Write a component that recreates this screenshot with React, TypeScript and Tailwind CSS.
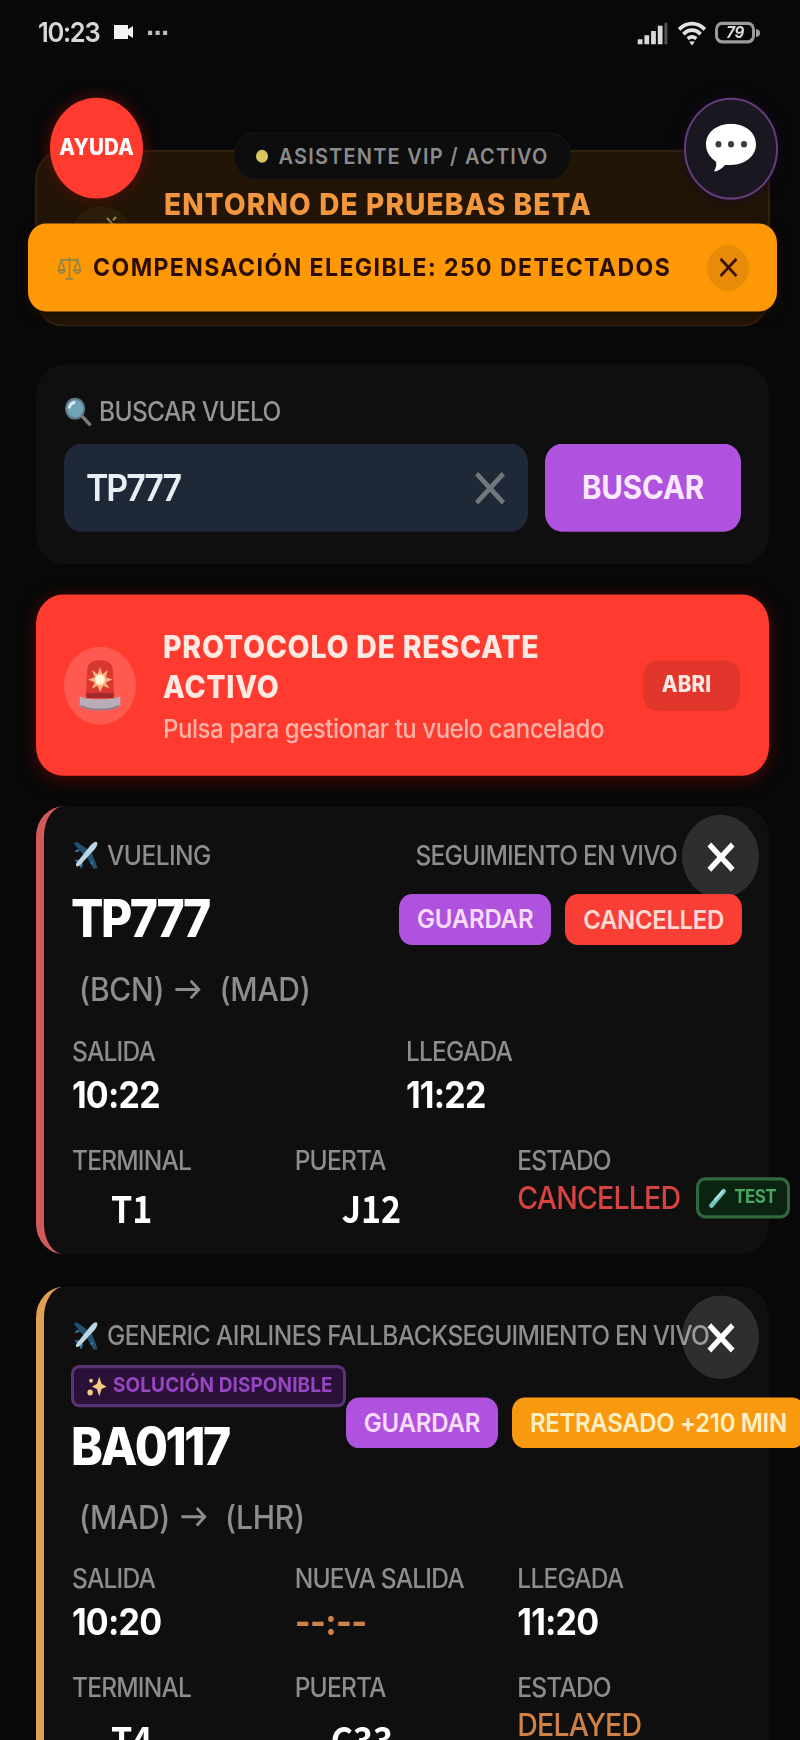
import type { ReactNode } from "react";

type Flight = {
  code: string;
  airline: string;
  from: string;
  to: string;
  departure: string;
  newDeparture?: string;
  arrival: string;
  terminal: string;
  terminalClasses: string;
  gate: string;
  gateClasses: string;
  status: string;
  badge: string;
  solution?: boolean;
  test?: boolean;
  borderClass: string;
  badgeClass: string;
  statusClass: string;
};

const FLIGHTS: Flight[] = [
  {
    code: "TP777",
    airline: "VUELING",
    from: "BCN",
    to: "MAD",
    departure: "10:22",
    arrival: "11:22",
    terminal: "T1",
    terminalClasses: "mt-[11px] pl-[39px]",
    gate: "J12",
    gateClasses: "mt-[11px] pl-[47px]",
    status: "CANCELLED",
    badge: "CANCELLED",
    test: true,
    borderClass: "border-l-[#d2595c]",
    badgeClass: "bg-[#f93e35] text-[#ffd9d2]",
    statusClass: "text-[#d9433f]",
  },
  {
    code: "BA0117",
    airline: "GENERIC AIRLINES FALLBACK",
    from: "MAD",
    to: "LHR",
    departure: "10:20",
    newDeparture: "--:--",
    arrival: "11:20",
    terminal: "T4",
    terminalClasses: "mt-[15px] pl-[39px]",
    gate: "C33",
    gateClasses: "mt-[15px] pl-[36px]",
    status: "DELAYED",
    badge: "RETRASADO +210 MIN",
    solution: true,
    borderClass: "border-l-[#e0a055]",
    badgeClass: "bg-[#f9990f] text-[#fff0c4]",
    statusClass: "text-[#cf8146]",
  },
];

const Cross = ({ className }: { className: string }) => (
  <svg viewBox="0 0 24 24" fill="none" stroke="currentColor" className={className}>
    <path d="M2 2 22 22M22 2 2 22" />
  </svg>
);

const PlaneIcon = () => (
  <svg viewBox="0 0 28 28" className="-ml-px h-[27px] w-[28px] shrink-0">
    <path d="M2 2 6 1 18 9 13 14ZM27 26 23 27 16 16 21 11Z" fill="#24506d" />
    <path d="M3 18 7 18 12 22 10 27 8 23Z" fill="#3d7799" />
    <path d="M26 1c2 1 0 5-2 7L10 22c-2 2-4 3-5 2s0-3 2-5L20 4c2-2 5-4 6-3Z" fill="#bcd6e6" />
    <path d="M4 10 8 9M20 22 22 20" stroke="#3d7799" strokeWidth="2" />
  </svg>
);

const SearchIcon = () => (
  <svg viewBox="0 0 28 28" className="h-[27px] w-[28px] shrink-0">
    <path d="m18 18 8 8" stroke="#77797c" strokeWidth="3.500" strokeLinecap="round" />
    <circle cx="11" cy="11" r="9.5" fill="#6fa3b8" stroke="#5f7884" strokeWidth="2" />
    <path d="M5 11a6 6 0 0 1 6-6" stroke="#d5eaf2" strokeWidth="3" fill="none" />
  </svg>
);

const ScalesIcon = () => (
  <svg viewBox="0 0 26 26" fill="none" stroke="#9a8541" strokeWidth="1.8" className="h-[24px] w-[25px] shrink-0">
    <path d="M13 2v21M3 5h20M9 24h8M4 5 1 15h7L4 5ZM22 5l-4 10h7L22 5Z" />
    <path d="M1 15c1 4 6 4 7 0M18 15c1 4 6 4 7 0" />
  </svg>
);

const SirenIcon = () => (
  <svg viewBox="0 0 44 52" className="h-[50px] w-[44px]">
    <path d="M7 36 9 9c0-10 26-10 26 0l2 27Z" fill="#d93832" />
    <path d="M8 33h28v5H8Z" fill="#a32a2c" />
    <path d="M1 36c6 4 36 4 42 0v9c-3 6-39 6-42 0Z" fill="#b9adb9" />
    <path d="M2 45c6 5 34 5 40 0" stroke="#8f7f8e" strokeWidth="2" fill="none" />
    <path
      d="m22 8 2.5 7 5.500-4-2 7 7 2-7 3 4 6-6.500-3L22 32l-2.500-6-6 3 3-6-7-3 7-2-3-7 6 4Z"
      fill="#ffb17d"
    />
    <circle cx="22" cy="20" r="5" fill="#fff3d8" />
  </svg>
);

const SparklesIcon = () => (
  <svg viewBox="0 0 22 22" fill="#f3cb86" className="h-[20px] w-[21px] shrink-0">
    <path d="m14 1 2.500 7 5.500 3-5.500 2.500L14 21l-2.500-7.500L6 11l5.500-3Z" />
    <circle cx="4" cy="17" r="3" />
    <circle cx="5" cy="5" r="2" />
  </svg>
);

const TubeIcon = () => (
  <svg viewBox="0 0 20 20" strokeLinecap="round" className="h-[19px] w-[20px] shrink-0">
    <path d="M3 17 16 3" stroke="#6fc9c0" strokeWidth="4.500" />
    <path d="M7 11 15 3" stroke="#b5e6e3" strokeWidth="2" />
  </svg>
);

const StatusBar = () => (
  <div className="flex h-[60px] items-center pr-[40px] pl-[38px] text-[#d8d8d8]">
    <span className="text-[25.500px] font-semibold tracking-[-1.3px]">10:23</span>
    <svg viewBox="0 0 20 14" fill="#f2f2f2" className="ml-[15px] h-[14px] w-[20px]">
      <path d="M0 0h14v4l5-3v11l-5-3v4H0Z" />
    </svg>
    <svg viewBox="0 0 24 6" fill="#bdbdbd" className="ml-[12px] h-[5px] w-[24px]">
      <path d="M0 0h5v5H0ZM9 0h5v5H9ZM18 0h5v5h-5Z" />
    </svg>
    <svg viewBox="0 0 32 22" className="ml-auto h-[21px] w-[32px]">
      <path d="M0 17h5v5H0ZM7 13h5v9H7ZM14 9h5v13h-5ZM21 4h5v18h-5Z" fill="#dadada" />
      <path d="M28 1h3v21h-3Z" fill="#555" />
    </svg>
    <svg viewBox="0 0 30 24" fill="none" stroke="#e3e3e3" strokeWidth="3.600" className="ml-[8px] h-[23px] w-[30px]">
      <path d="M1.500 8.500c8-7.500 19-7.500 27 0M6 13c5.500-5 12.500-5 18 0M10.500 17.500c3-2.500 6-2.500 9 0" />
      <path d="m15 24-3-4h6Z" fill="#e3e3e3" stroke="none" />
    </svg>
    <div className="ml-[8px] flex h-[20px] w-[40px] items-center justify-center rounded-[7px] border-[3px] border-[#9b9b9b] text-[15px] font-bold tracking-[-0.5px] italic">
      79
    </div>
    <div className="ml-px h-[7px] w-[4px] rounded-r-full bg-[#9b9b9b]" />
  </div>
);

const BetaBanner = () => (
  <div className="relative mt-[78px] mr-[30px] ml-[35px] h-[163px] rounded-[28px] border-2 border-[#32200f] bg-[#221506]">
    <div className="absolute top-[50px] left-[31px] size-[66px] rounded-full bg-[#2c1f0a]">
      <svg viewBox="0 0 12 12" stroke="#8f9a58" strokeWidth="2" className="mt-[9px] ml-[38px] size-[12px]">
        <path d="M1 2 8 9M7 4l3-3" />
      </svg>
    </div>
    <h1 className="absolute top-[30px] left-[127px] text-[28px] leading-[36px] font-extrabold tracking-[1.150px] whitespace-nowrap text-[#f3973f]">
      ENTORNO DE PRUEBAS BETA
    </h1>

    <div className="absolute top-[-18px] left-[197px] flex h-[44px] w-[337px] items-center justify-center rounded-full border border-[#171513] bg-[#0d0d0d]">
      <span className="mr-[10px] size-[12px] rounded-full bg-[#d9c65c]" />
      <span className="text-[20px] font-semibold tracking-[1.2px] whitespace-nowrap text-[#8b8b8b]">
        ASISTENTE VIP / ACTIVO
      </span>
    </div>

    <div className="absolute top-[-50px] left-[13px] flex size-[93px] items-center justify-center rounded-full bg-[#ff3b30] text-[20.500px] font-extrabold tracking-[0.1px] text-white shadow-[0_0_14px_#5a0c08]">
      AYUDA
    </div>
    <div className="absolute top-[-50px] right-[-10px] flex size-[94px] items-center justify-center rounded-full border-2 border-[#643c7e] bg-[#1b1720] shadow-[0_0_12px_#160a20]">
      <svg viewBox="0 0 50 46" className="h-[46px] w-[50px]">
        <path
          d="M25 0C11 0 0 8 0 19c0 7 4 12 10 16 1 4-1 7-2 9 4 0 8-3 11-6h6c14 0 25-8 25-19S39 0 25 0Z"
          fill="#fff"
        />
        <g fill="#3c3c3c">
          <circle cx="12.500" cy="19" r="3" />
          <circle cx="25" cy="19" r="3" />
          <circle cx="38" cy="19" r="3" />
        </g>
      </svg>
    </div>

    <div className="absolute top-[66px] left-[-9px] flex h-[81px] w-[749px] items-center rounded-[18px] bg-[#ff9805] pr-[28px] pl-[29px] shadow-[0_3px_10px_#1c0d00]">
      <ScalesIcon />
      <span className="ml-[11px] text-[23px] font-bold tracking-[1.45px] whitespace-nowrap text-[#2a0d02]">
        COMPENSACIÓN ELEGIBLE: 250 DETECTADOS
      </span>
      <button className="ml-auto flex size-[42px] items-center justify-center rounded-full bg-[#e88b08]">
        <Cross className="size-[19px] text-[#3a1403] stroke-[3.4]" />
      </button>
    </div>
  </div>
);

const SearchCard = () => (
  <section className="mt-[35px] mr-[31px] ml-[36px] h-[184px] rounded-[28px] bg-[#0f0f0f] pt-[28px] pr-[28px] pl-[28px]">
    <div className="flex h-[30px] items-center gap-[7px]">
      <SearchIcon />
      <span className="text-[24.500px] font-medium tracking-[-0.650px] text-[#949494]">BUSCAR VUELO</span>
    </div>
    <div className="mt-[15px] flex h-[81px] gap-[17px]">
      <div className="flex flex-1 items-center justify-between rounded-[17px] bg-[#1f2836] pr-[22px] pl-[22px]">
        <span className="text-[34px] font-semibold tracking-[-2.1px] text-[#e9eef5]">TP777</span>
        <Cross className="size-[32px] text-[#73777c] stroke-[3.4]" />
      </div>
      <button className="h-full w-[196px] rounded-[17px] bg-[#af52de] text-[29.500px] font-bold tracking-[-0.1px] text-[#fbeaff]">
        BUSCAR
      </button>
    </div>
  </section>
);

const RescueCard = () => (
  <section className="mt-[28px] mr-[31px] ml-[36px] flex h-[167px] items-center rounded-[27px] bg-[#ff3b30] pr-[29px] pl-[28px] shadow-[0_3px_16px_#4a0805]">
    <div className="flex size-[72px] shrink-0 items-center justify-center rounded-full bg-[#ff5a50]">
      <SirenIcon />
    </div>
    <div className="ml-[27px] flex-1 pt-[4px]">
      <h2 className="text-[28.500px] leading-[37px] font-extrabold tracking-[0.750px] whitespace-nowrap text-[#ffe9e2]">
        PROTOCOLO DE RESCATE
        <br />
        ACTIVO
      </h2>
      <p className="mt-[2px] text-[24px] leading-[38px] font-medium tracking-[-0.450px] whitespace-nowrap text-[#ffb3a8]">
        Pulsa para gestionar tu vuelo cancelado
      </p>
    </div>
    <button className="h-[46px] w-[97px] rounded-[14px] bg-[#e2362d] pr-[10px] text-[20.500px] font-extrabold tracking-[0.2px] text-[#ffe6e0]">
      ABRI
    </button>
  </section>
);

const Field = ({
  label,
  children,
}: {
  label: string;
  children: ReactNode;
}) => (
  <div className="whitespace-nowrap">
    <div className="h-[30px] text-[24.500px] leading-[30px] font-medium tracking-[-0.8px] text-[#8d8d8d]">
      {label}
    </div>
    {children}
  </div>
);

const Time = ({ value, muted }: { value: string; muted?: boolean }) => (
  <div
    className={`mt-[7px] text-[34px] leading-[36px] font-bold ${
      muted ? "tracking-[-0.6px] text-[#cf8146]" : "tracking-[-0.8px] text-white"
    }`}
  >
    {value}
  </div>
);

const FlightCard = ({ flight }: { flight: Flight }) => (
  <section
    className={`relative mr-[31px] ml-[36px] rounded-[28px] border-l-8 bg-[#0f0f0f] pt-[30px] pr-[27px] pb-[25px] pl-[28px] ${flight.borderClass}`}
  >
    <div className="flex h-[30px] items-center text-[24.500px] font-medium whitespace-nowrap text-[#8d8d8d]">
      <PlaneIcon />
      <span className="ml-[8px] tracking-[-0.550px]">{flight.airline}</span>
      <span className="mr-[65px] ml-auto tracking-[-0.750px]">SEGUIMIENTO EN VIVO</span>
    </div>

    <button className="absolute top-[8px] right-[10px] flex size-[77px] items-center justify-center rounded-full bg-white/13">
      <Cross className="size-[28px] text-white stroke-[4.5]" />
    </button>

    <div className="mt-[12px] flex items-center justify-between whitespace-nowrap">
      <div className="flex flex-col gap-[4px]">
        {flight.solution && (
          <div className="-ml-px flex h-[39px] w-[275px] items-center rounded-[8px] border-[3px] border-[#593373] bg-[#2a1138] pl-[12px]">
            <SparklesIcon />
            <span className="ml-[6px] text-[19px] font-bold tracking-[0.1px] text-[#9746c3]">
              SOLUCIÓN DISPONIBLE
            </span>
          </div>
        )}
        <div className="-ml-px h-[64px] text-[48px] leading-[64px] font-extrabold tracking-[-2.5px] text-white">
          {flight.code}
        </div>
      </div>
      <div className="relative flex shrink-0 gap-[14px] text-[24px] font-semibold">
        <button className="h-[47px] w-[152px] rounded-[13px] bg-[#af52de] tracking-[-0.2px] text-[#f8dcff]">
          GUARDAR
        </button>
        <span className={`h-[47px] rounded-[13px] px-[18px] leading-[47px] tracking-[-0.350px] ${flight.badgeClass}`}>
          {flight.badge}
        </span>
      </div>
    </div>

    <div className="mt-[13px] flex h-[40px] items-center pl-[7px] text-[30px] font-medium tracking-[-0.3px] text-[#8d8d8d]">
      <span>({flight.from})</span>
      <svg viewBox="0 0 28 20" fill="none" stroke="currentColor" strokeWidth="3" className="ml-[10px] h-[18px] w-[28px]">
        <path d="M0 10h26M17 1l9 9-9 9" />
      </svg>
      <span className="ml-[17px]">({flight.to})</span>
    </div>

    <div className={`mt-[22px] mr-[2px] grid ${flight.newDeparture ? "grid-cols-3" : "grid-cols-2"}`}>
      <Field label="SALIDA">
        <Time value={flight.departure} />
      </Field>
      {flight.newDeparture && (
        <Field label="NUEVA SALIDA">
          <Time value={flight.newDeparture} muted />
        </Field>
      )}
      <Field label="LLEGADA">
        <Time value={flight.arrival} />
      </Field>
    </div>

    <div className="mt-[27px] mr-[2px] grid grid-cols-3">
      <Field label="TERMINAL">
        <div
          className={`font-['Noto_Sans_CJK_SC',sans-serif] text-[34px] leading-[36px] font-bold text-white ${flight.terminalClasses}`}
        >
          {flight.terminal}
        </div>
      </Field>
      <Field label="PUERTA">
        <div
          className={`font-['Noto_Sans_CJK_SC',sans-serif] text-[34px] leading-[36px] font-bold text-white ${flight.gateClasses}`}
        >
          {flight.gate}
        </div>
      </Field>
      <Field label="ESTADO">
        <div className="flex h-[38px] items-center pt-[2px]">
          <span className={`text-[28.500px] font-medium tracking-[-0.8px] ${flight.statusClass}`}>
            {flight.status}
          </span>
          {flight.test && (
            <span className="ml-[16px] flex h-[38px] w-[94px] shrink-0 items-center rounded-[9px] border-[3px] border-[#31683e] bg-[#0b2411] pl-[9px] text-[17px] font-bold tracking-[-0.6px] text-[#49a560]">
              <TubeIcon />
              <span className="ml-[6px]">TEST</span>
            </span>
          )}
        </div>
      </Field>
    </div>
  </section>
);

const App = () => (
  <div className="h-[1740px] w-[800px] overflow-hidden bg-[#080808] font-['Inter',sans-serif]">
    <div className="h-[1604px] w-[800px] origin-top scale-y-[1.085]">
      <StatusBar />
      <BetaBanner />
      <SearchCard />
      <RescueCard />
      <div className="mt-[28px] flex flex-col gap-[30px]">
        {FLIGHTS.map((flight) => (
          <FlightCard key={flight.code} flight={flight} />
        ))}
      </div>
    </div>
  </div>
);

export default App;
